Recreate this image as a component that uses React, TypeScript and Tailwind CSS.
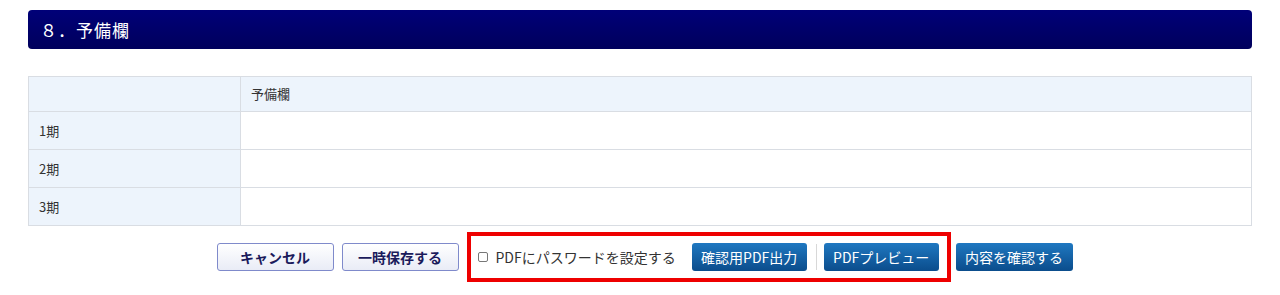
const font = "font-['Meiryo','Noto_Sans_CJK_JP',sans-serif]"

const rows = ["1期", "2期", "3期"]

const App = () => {
    return (
        <div className={`w-[1280px] h-[295px] bg-white px-[28px] pt-[10px] ${font}`}>
            {/* section title */}
            <div className="h-[39px] rounded-[4px] bg-gradient-to-b from-[#000078] to-[#00005c] flex items-center pl-[12px]">
                <h2 className="text-white text-[17px] tracking-[1px]">８．予備欄</h2>
            </div>

            <table className="mt-[27px] w-full border-collapse text-[13px] text-[#333]">
                <tbody>
                    <tr className="h-[35px] bg-[#edf4fc]">
                        <th className="w-[212px] border border-[#d9dde3]" />
                        <th className="border border-[#d9dde3] text-left font-normal pl-[10px]">予備欄</th>
                    </tr>
                    {rows.map((r) => (
                        <tr key={r} className="h-[38px]">
                            <td className="bg-[#edf4fc] border border-[#d9dde3] pl-[10px]">{r}</td>
                            <td className="border border-[#d9dde3]" />
                        </tr>
                    ))}
                </tbody>
            </table>

            <div className="mt-[6px] flex items-center justify-center gap-[8px] pl-[9px]">
                <button className="w-[117px] h-[28px] rounded-[3px] border border-[#7f8acb] bg-gradient-to-b from-white to-[#e9ecf6] text-[14px] font-bold text-[#1b1b5c]">
                    キャンセル
                </button>
                <button className="w-[117px] h-[28px] rounded-[3px] border border-[#7f8acb] bg-gradient-to-b from-white to-[#e9ecf6] text-[14px] font-bold text-[#1b1b5c]">
                    一時保存する
                </button>
                <div className="h-[50px] w-[484px] border-4 border-[#ee0000] flex items-center pl-[7px]">
                    <span className="w-[10px] h-[10px] border border-[#777] rounded-[2px] bg-white" />
                    <span className="ml-[8px] text-[14px] text-[#333]">PDFにパスワードを設定する</span>
                    <button className="ml-[16px] w-[115px] h-[28px] rounded-[3px] bg-gradient-to-b from-[#1f78c1] to-[#0b4d8c] text-white text-[14px]">
                        確認用PDF出力
                    </button>
                    <span className="ml-[9px] w-px h-[26px] bg-[#d8d8d8]" />
                    <button className="ml-[7px] w-[115px] h-[28px] rounded-[3px] bg-gradient-to-b from-[#1f78c1] to-[#0b4d8c] text-white text-[14px]">
                        PDFプレビュー
                    </button>
                </div>
                <button className="-ml-[3px] w-[117px] h-[28px] rounded-[3px] bg-gradient-to-b from-[#1f78c1] to-[#0b4d8c] text-white text-[14px]">
                    内容を確認する
                </button>
            </div>
        </div>
    )
}

export default App
